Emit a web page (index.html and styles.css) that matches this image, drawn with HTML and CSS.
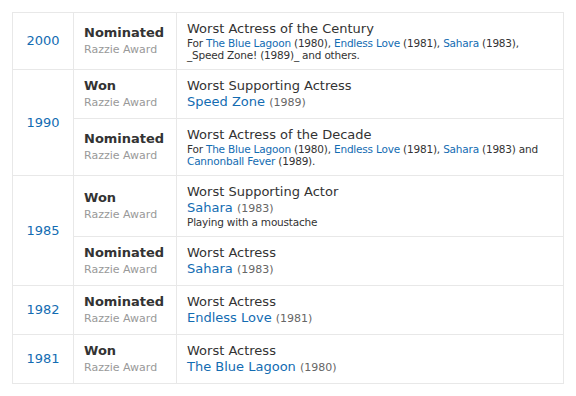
FILE: index.html
```html
<!DOCTYPE html>
<html>
<head>
<meta charset="utf-8">
<link rel="stylesheet" href="styles.css">
</head>
<body>
<table class="awards">
  <colgroup>
    <col class="c-year">
    <col class="c-outcome">
    <col class="c-desc">
  </colgroup>
  <tr>
    <td class="year"><a href="#">2000</a></td>
    <td class="outcome"><b>Nominated</b><br><span class="cat">Razzie Award</span></td>
    <td class="desc">Worst Actress of the Century
      <div class="details">For <a href="#">The Blue Lagoon</a> (1980), <a href="#">Endless Love</a> (1981), <a href="#">Sahara</a> (1983), _Speed Zone! (1989)_ and others.</div>
    </td>
  </tr>
  <tr>
    <td class="year" rowspan="2"><a href="#">1990</a></td>
    <td class="outcome"><b>Won</b><br><span class="cat">Razzie Award</span></td>
    <td class="desc">Worst Supporting Actress<br><a href="#">Speed Zone</a> <span class="yr">(1989)</span></td>
  </tr>
  <tr>
    <td class="outcome"><b>Nominated</b><br><span class="cat">Razzie Award</span></td>
    <td class="desc">Worst Actress of the Decade
      <div class="details">For <a href="#">The Blue Lagoon</a> (1980), <a href="#">Endless Love</a> (1981), <a href="#">Sahara</a> (1983) and <a href="#">Cannonball Fever</a> (1989).</div>
    </td>
  </tr>
  <tr>
    <td class="year" rowspan="2"><a href="#">1985</a></td>
    <td class="outcome"><b>Won</b><br><span class="cat">Razzie Award</span></td>
    <td class="desc">Worst Supporting Actor<br><a href="#">Sahara</a> <span class="yr">(1983)</span>
      <div class="details">Playing with a moustache</div>
    </td>
  </tr>
  <tr>
    <td class="outcome"><b>Nominated</b><br><span class="cat">Razzie Award</span></td>
    <td class="desc">Worst Actress<br><a href="#">Sahara</a> <span class="yr">(1983)</span></td>
  </tr>
  <tr>
    <td class="year"><a href="#">1982</a></td>
    <td class="outcome"><b>Nominated</b><br><span class="cat">Razzie Award</span></td>
    <td class="desc">Worst Actress<br><a href="#">Endless Love</a> <span class="yr">(1981)</span></td>
  </tr>
  <tr>
    <td class="year"><a href="#">1981</a></td>
    <td class="outcome"><b>Won</b><br><span class="cat">Razzie Award</span></td>
    <td class="desc">Worst Actress<br><a href="#">The Blue Lagoon</a> <span class="yr">(1980)</span></td>
  </tr>
</table>
</body>
</html>
```

FILE: styles.css
```css
html, body {
  margin: 0;
  background: #fff;
}
body {
  padding: 12px;
  font-family: "DejaVu Sans", Verdana, sans-serif;
  font-size: 13px;
  line-height: 16px;
  color: #333;
}
a {
  color: #136cb2;
  text-decoration: none;
}
.awards {
  border-collapse: collapse;
  table-layout: fixed;
  width: 552px;
  border: 1px solid #e8e8e8;
}
.c-year { width: 61px; }
.c-outcome { width: 103px; }
.awards td {
  border: 1px solid #e8e8e8;
  padding: 8px 10px;
  vertical-align: middle;
}
.awards td.year {
  text-align: center;
  padding: 8px 0;
}
.outcome b {
  font-weight: bold;
  color: #333;
}
.cat {
  font-size: 11px;
  line-height: 12px;
  color: #999;
}
.yr {
  font-size: 11px;
  line-height: 12px;
  color: #666;
}
.details {
  font-size: 10.5px;
  letter-spacing: -0.2px;
  line-height: 12px;
  color: #333;
}
```
